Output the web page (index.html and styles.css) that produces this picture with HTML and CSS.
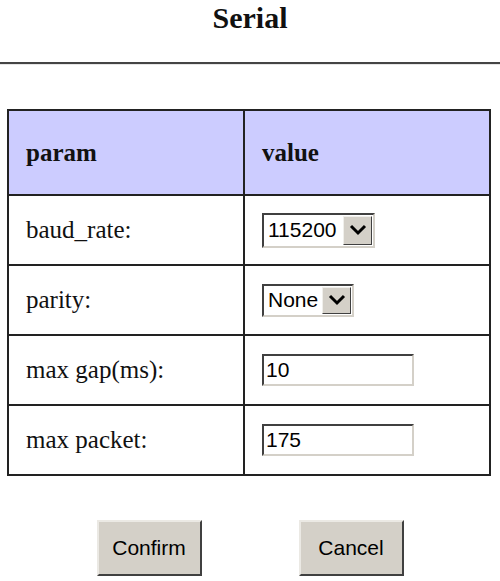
FILE: index.html
```html
<!DOCTYPE html>
<html>
<head>
<meta charset="utf-8">
<title>Serial</title>
<link rel="stylesheet" href="styles.css">
</head>
<body>
<h1 class="title">Serial</h1>
<hr class="rule">
<table class="params">
  <thead>
    <tr><th class="col-param">param</th><th class="col-value">value</th></tr>
  </thead>
  <tbody>
    <tr>
      <td>baud_rate:</td>
      <td>
        <div class="select select-baud">
          <span class="select-text">115200</span>
          <span class="select-btn"><svg width="18" height="12" viewBox="0 0 18 12"><path d="M2 2 L9 9 L16 2" fill="none" stroke="#000" stroke-width="3"/></svg></span>
        </div>
      </td>
    </tr>
    <tr>
      <td>parity:</td>
      <td>
        <div class="select select-parity">
          <span class="select-text">None</span>
          <span class="select-btn"><svg width="18" height="12" viewBox="0 0 18 12"><path d="M2 2 L9 9 L16 2" fill="none" stroke="#000" stroke-width="3"/></svg></span>
        </div>
      </td>
    </tr>
    <tr>
      <td>max gap(ms):</td>
      <td><input class="field" type="text" value="10"></td>
    </tr>
    <tr>
      <td>max packet:</td>
      <td><input class="field" type="text" value="175"></td>
    </tr>
  </tbody>
</table>
<div class="actions">
  <button class="btn" type="button">Confirm</button>
  <button class="btn" type="button">Cancel</button>
</div>
</body>
</html>
```
FILE: styles.css
```css
html, body {
  margin: 0;
  padding: 0;
  background: #fff;
}
body {
  width: 500px;
  font-family: "Liberation Serif", "Times New Roman", serif;
  color: #111;
}
.title {
  margin: 0;
  padding-top: 1px;
  font-size: 30px;
  line-height: 34px;
  font-weight: bold;
  text-align: center;
}
.rule {
  margin: 27px 0 0 0;
  border: 0;
  height: 2px;
  background: #444;
  border-bottom: 1px solid #e6e6e6;
}
.params {
  margin: 44px 0 0 7px;
  width: 484px;
  border-collapse: collapse;
  border: 2px solid #222;
  font-size: 25px;
}
.params th,
.params td {
  border: 2px solid #222;
  text-align: left;
  padding: 0 0 0 17px;
  vertical-align: middle;
}
.params th {
  background: #ccccff;
  height: 83px;
  font-weight: bold;
}
.params td {
  height: 68px;
}
.col-param {
  width: 217px;
}
.select {
  display: inline-flex;
  align-items: stretch;
  box-sizing: border-box;
  border: 2px solid;
  border-color: #404040 #d4d0c8 #d4d0c8 #404040;
  background: #fff;
  font-family: "Liberation Sans", Arial, sans-serif;
  font-size: 21px;
  vertical-align: middle;
}
.select-baud {
  width: 113px;
  height: 35px;
}
.select-parity {
  width: 92px;
  height: 33px;
}
.select-text {
  flex: 1;
  display: flex;
  align-items: center;
  padding-left: 4px;
  color: #000;
}
.select-btn {
  width: 29px;
  box-sizing: border-box;
  margin: 1px 1px 1px 0;
  display: flex;
  align-items: center;
  justify-content: center;
  background: #d4d0c8;
  border: 1px solid;
  border-color: #f0efeb #404040 #404040 #f0efeb;
}
.field {
  box-sizing: border-box;
  width: 152px;
  height: 32px;
  margin: 0;
  padding: 0 0 0 2px;
  border: 2px solid;
  border-color: #404040 #d4d0c8 #d4d0c8 #404040;
  font-family: "Liberation Sans", Arial, sans-serif;
  font-size: 21px;
  color: #000;
  background: #fff;
  outline: none;
  vertical-align: middle;
}
.actions {
  display: flex;
  justify-content: center;
  gap: 97px;
  margin-top: 44px;
}
.btn {
  width: 105px;
  height: 56px;
  box-sizing: border-box;
  background: #d4d0c8;
  border: 2px solid;
  border-color: #ebe9e4 #404040 #404040 #ebe9e4;
  font-family: "Liberation Sans", Arial, sans-serif;
  font-size: 21px;
  color: #000;
  padding: 0;
}
```
